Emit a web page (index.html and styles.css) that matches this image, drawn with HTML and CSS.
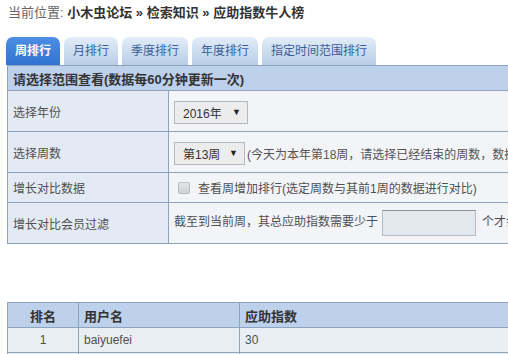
FILE: index.html
```html
<!DOCTYPE html>
<html lang="zh-CN">
<head>
    <meta charset="UTF-8">
    <title>应助指数牛人榜 - 小木虫论坛</title>
    <link rel="stylesheet" href="styles.css">
</head>
<body>

    <!-- 当前位置 -->
    <div class="crumb">
        当前位置: <b>小木虫论坛 » 检索知识 » 应助指数牛人榜</b>
    </div>

    <!-- 选项卡 -->
    <ul class="tabs">
        <li class="tabs__item tabs__item--active">周排行</li>
        <li class="tabs__item">月排行</li>
        <li class="tabs__item">季度排行</li>
        <li class="tabs__item">年度排行</li>
        <li class="tabs__item">指定时间范围排行</li>
    </ul>

    <!-- 查询条件 -->
    <table class="filter">
        <tr>
            <th colspan="2" class="filter__head">请选择范围查看(数据每60分钟更新一次)</th>
        </tr>
        <tr>
            <td class="filter__label">选择年份</td>
            <td class="filter__value filter__value--select">
                <span class="select select--year">2016年<span class="select__arrow">▼</span></span>
            </td>
        </tr>
        <tr>
            <td class="filter__label">选择周数</td>
            <td class="filter__value filter__value--select">
                <span class="select select--week">第13周<span class="select__arrow">▼</span></span><span class="hint">(今天为本年第18周，请选择已经结束的周数，数据</span>
            </td>
        </tr>
        <tr>
            <td class="filter__label filter__label--short">增长对比数据</td>
            <td class="filter__value filter__value--short">
                <span class="check"></span>查看周增加排行(选定周数与其前1周的数据进行对比)
            </td>
        </tr>
        <tr>
            <td class="filter__label">增长对比会员过滤</td>
            <td class="filter__value filter__value--input">
                截至到当前周，其总应助指数需要少于<span class="box"></span>个才会显示
            </td>
        </tr>
    </table>

    <!-- 排行结果 -->
    <table class="rank">
        <tr>
            <th class="rank__no">排名</th>
            <th class="rank__name">用户名</th>
            <th>应助指数</th>
        </tr>
        <tr>
            <td class="rank__no">1</td>
            <td>baiyuefei</td>
            <td>30</td>
        </tr>
        <tr>
            <td class="rank__no">2</td>
            <td>xiaomuchong</td>
            <td>28</td>
        </tr>
    </table>

</body>
</html>
```

FILE: styles.css
```css
html {
    overflow: hidden;
}

body {
    margin: 0;
    padding: 0;
    background: #fff;
    color: #505050;
    font-family: "Liberation Sans", "Noto Sans CJK SC", sans-serif;
    font-size: 12px;
    width: 640px;
}

/* Breadcrumb */
.crumb {
    height: 26px;
    line-height: 26px;
    padding-left: 8px;
    font-size: 13px;
    color: #666;
}

.crumb b {
    color: #333;
}

/* Tabs */
.tabs {
    list-style: none;
    margin: 11px 0 0;
    padding: 0 0 0 6px;
    display: flex;
    gap: 4px;
    height: 28px;
}

.tabs__item {
    height: 28px;
    line-height: 28px;
    padding: 0 9px;
    border-radius: 7px 7px 0 0;
    background: linear-gradient(#e3edf8, #b7cde6);
    color: #3a5f96;
    font-size: 12px;
}

.tabs__item--active {
    background: linear-gradient(#4d8fe4, #3173cf);
    color: #fff;
    font-weight: bold;
}

/* Filter table */
.filter {
    border-collapse: collapse;
    margin-left: 7px;
    width: 600px;
}

.filter td, .filter th {
    border: 1px solid #8ea3bd;
    text-align: left;
    vertical-align: middle;
}

.filter__head {
    height: 24px;
    padding: 0 5px;
    background: #bdd0ec;
    font-size: 13px;
    color: #333;
}

.filter__label {
    width: 150px;
    padding: 0 5px;
    background: #e4eaf3;
    height: 40px;
}

.filter__label--short {
    height: 29px;
}

.filter__value {
    padding: 0 5px;
    background: #f3f4f8;
    white-space: nowrap;
}

.filter__value--select {
    vertical-align: top;
    padding-top: 2px;
}

.select {
    display: inline-flex;
    align-items: center;
    justify-content: space-between;
    height: 21px;
    padding: 0 6px 0 8px;
    border: 1px solid #b5b8bd;
    background: #ececec;
    color: #333;
    box-sizing: content-box;
}

.select--year {
    width: 58px;
}

.select--week {
    width: 55px;
}

.select__arrow {
    font-size: 9px;
    color: #222;
}

.hint {
    margin-left: 2px;
    color: #555;
}

.check {
    display: inline-block;
    width: 10px;
    height: 10px;
    margin: 0 8px 0 4px;
    border: 1px solid #b9bcc2;
    border-radius: 2px;
    background: linear-gradient(#e6e6e6, #cfd1d4);
    vertical-align: -1px;
}

.box {
    display: inline-block;
    width: 92px;
    height: 24px;
    margin: 0 6px 0 4px;
    border: 1px solid #b5bcc6;
    border-top-color: #8d939b;
    background: #e3e8ef;
    vertical-align: middle;
}

/* Ranking table */
.rank {
    border-collapse: collapse;
    margin: 58px 0 0 7px;
    width: 600px;
}

.rank th, .rank td {
    border: 1px solid #8ea3bd;
    height: 24px;
    padding: 0 5px;
    text-align: left;
}

.rank th {
    background: #bdd0ec;
    color: #333;
    font-size: 13px;
}

.rank td {
    background: #e9eef5;
}

.rank .rank__no {
    width: 60px;
    text-align: center;
}

.rank__name {
    width: 150px;
}
```
